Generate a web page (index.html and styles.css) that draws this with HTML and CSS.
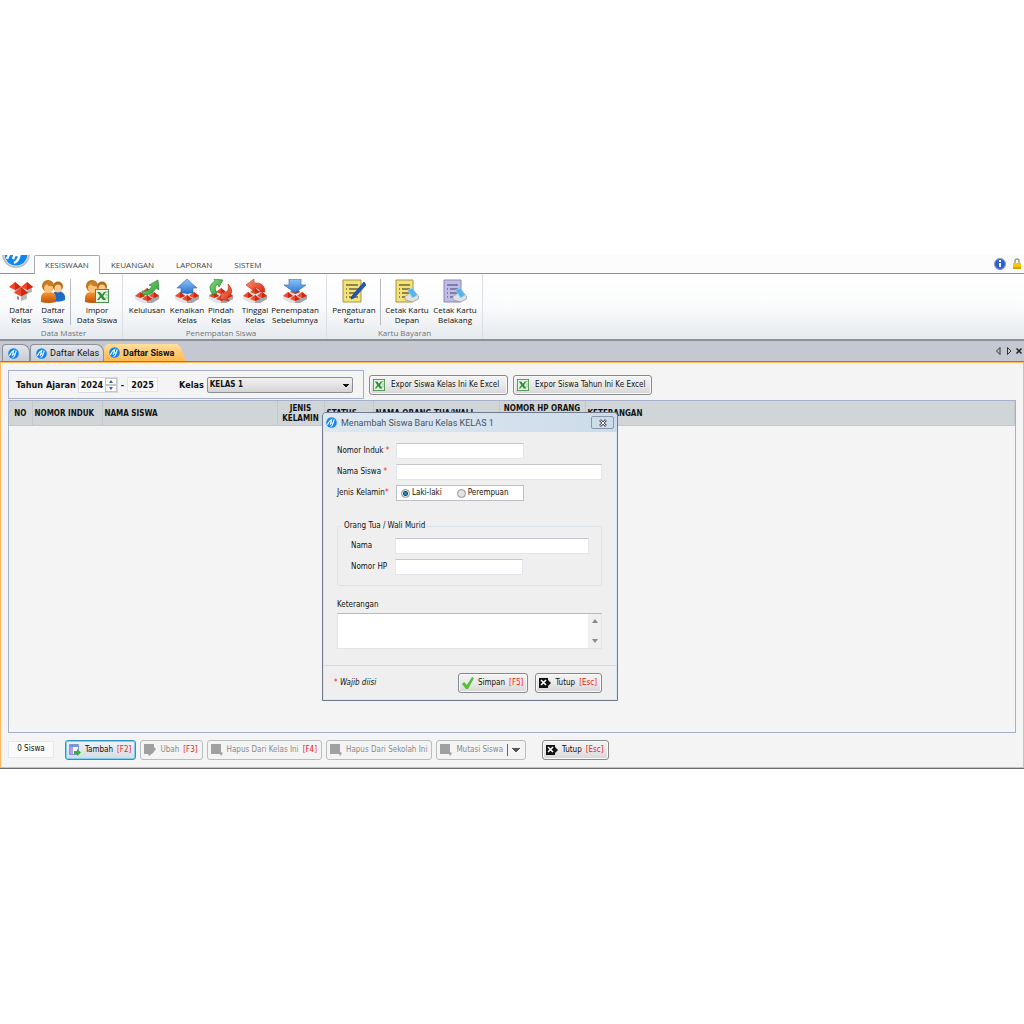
FILE: index.html
```
<!DOCTYPE html>
<html lang="id">
<head>
    <meta charset="UTF-8">
    <meta name="viewport" content="width=device-width, initial-scale=1.0">
    <title>Kesiswaan - Daftar Siswa</title>
    <link rel="stylesheet" href="styles.css">
</head>
<body>
    <svg class="sprites" aria-hidden="true">
        <defs>
            <linearGradient id="g-blue" x1="0" y1="0" x2="0" y2="1"><stop offset="0" stop-color="#8fc4f6"/><stop offset="1" stop-color="#2b78d2"/></linearGradient>
            <linearGradient id="g-green" x1="0" y1="0" x2="1" y2="1"><stop offset="0" stop-color="#8be07f"/><stop offset="1" stop-color="#229a30"/></linearGradient>
            <linearGradient id="g-red" x1="0" y1="0" x2="1" y2="1"><stop offset="0" stop-color="#ff9a72"/><stop offset="1" stop-color="#d8260c"/></linearGradient>
            <linearGradient id="g-orange" x1="0" y1="0" x2="0" y2="1"><stop offset="0" stop-color="#f59a35"/><stop offset="1" stop-color="#c05006"/></linearGradient>
        </defs>
        <symbol id="logo" viewBox="0 0 24 24">
            <circle cx="12" cy="12" r="11.5" fill="#0e86f0"/>
            <path d="M3 17Q6 9 12.500 5.500L10.500 13h5M18 5.500 15 15Q14 19 10 21M10.500 13l-1.500 4" fill="none" stroke="#fff" stroke-width="2.400"/>
        </symbol>
        <symbol id="house" viewBox="0 0 12 12">
            <path d="M1 5v5l5 2V6z" fill="#f2f2f2"/>
            <path d="M11 5v5l-5 2V6z" fill="#b4b6b8"/>
            <path d="M0 5 6 0l6 5-6 3z" fill="#f0482a"/>
            <path d="M6 0v8l6-3z" fill="#cf2a10"/>
        </symbol>
        <symbol id="houses" viewBox="0 0 24 24">
            <path d="M0 16 12 10l12 6v4l-7 4H7l-7-4z" fill="#e0e2e4"/>
            <path d="M12 20v4h5l7-4v-3z" fill="#a4a6a9"/>
            <path d="M7 13l5-4 5 4-5 2zM0 17l5-4 5 4-5 2zM14 17l5-4 5 4-5 2zM7 20l5-4 5 4-5 2z" fill="#f0482a"/>
            <path d="M12 9v6l5-2zM5 13v6l5-2zM19 13v6l5-2zM12 16v6l5-2z" fill="#cf2a10"/>
        </symbol>
        <symbol id="classes" viewBox="0 0 24 24">
            <use href="#house" x="0" y="3" width="12" height="12"/>
            <use href="#house" x="12" y="3" width="12" height="12"/>
            <use href="#house" x="5" y="8" width="14" height="14"/>
            <path d="M8 20v-3l2 1v3z" fill="#8a8c90"/>
        </symbol>
        <symbol id="people" viewBox="0 0 24 24">
            <path d="M12 22v-5q0-5 5-5t7 5v4q-6 3-12 1z" fill="#1f6bc4"/>
            <circle cx="17" cy="7.500" r="5" fill="#b06d14"/>
            <ellipse cx="17" cy="9.500" rx="3.500" ry="4" fill="#ffc98f"/>
            <path d="M0 23v-4q0-6 6-6h3q6 0 6 6v4q-8 2-15 0z" fill="url(#g-orange)"/>
            <circle cx="7" cy="7" r="6" fill="#b86c14"/>
            <ellipse cx="7.500" cy="9" rx="4.500" ry="5" fill="#ffc07c"/>
            <path d="M2 7q1-5 6-5 4 1 4 5-5 1-6-2-1 2-4 2z" fill="#c98222"/>
        </symbol>
        <symbol id="excel" viewBox="0 0 14 14">
            <rect x=".5" y=".5" width="13" height="13" fill="#e6f2e4" stroke="#4a8f4c"/>
            <path d="M10 3h3M10 6h3M10 9h3" stroke="#8bc08c"/>
            <path d="M2 3h3l2 2.500L9 3h2L8.200 7 11 11H8L6 8.500 4 11H2l3-4z" fill="#2f8f36"/>
        </symbol>
        <symbol id="import" viewBox="0 0 24 24">
            <use href="#people" width="24" height="24"/>
            <use href="#excel" x="10" y="10" width="14" height="14"/>
        </symbol>
        <symbol id="graduate" viewBox="0 0 24 24">
            <use href="#houses" width="24" height="24"/>
            <path d="M7 12q7 1 10-5l-3-1 9-5 1 10-3-2q-5 9-14 6z" fill="url(#g-green)" stroke="#1a7a26" stroke-width=".6"/>
        </symbol>
        <symbol id="promote" viewBox="0 0 24 24">
            <use href="#houses" width="24" height="24"/>
            <path d="M12 0 22 9h-4v5H6V9H2z" fill="url(#g-blue)" stroke="#2a66b0" stroke-width=".6"/>
        </symbol>
        <symbol id="transfer" viewBox="0 0 24 24">
            <use href="#houses" width="24" height="24"/>
            <path d="M4 16Q-3 7 6 2L5 0l9 1-4 7-1-3q-5 3-1 9z" fill="url(#g-green)" stroke="#1a7a26" stroke-width=".6"/>
            <path d="M19 5q8 8-1 14l2 3-9-2 2-8 2 3q6-4 4-10z" fill="url(#g-red)" stroke="#b91c08" stroke-width=".6"/>
        </symbol>
        <symbol id="stay" viewBox="0 0 24 24">
            <use href="#houses" width="24" height="24"/>
            <path d="M3 6 11 0v4q11-1 11 9h-5q0-4-6-4v3z" fill="url(#g-red)" stroke="#c5290e" stroke-width=".6"/>
        </symbol>
        <symbol id="previous" viewBox="0 0 24 24">
            <use href="#houses" width="24" height="24"/>
            <path d="M6 0h12v6h5l-11 8L1 6h5z" fill="url(#g-blue)" stroke="#2a66b0" stroke-width=".6"/>
        </symbol>
        <symbol id="card-edit" viewBox="0 0 24 24">
            <path d="M1 1h18v22H1z" fill="#f5e276" stroke="#a8944a"/>
            <path d="M4 6h12M7 10h9M7 14h9M7 18h9M4 10h1M4 14h1M4 18h1" stroke="#6a6646" stroke-width="1.500"/>
            <path d="M22 3 24 6 12 19l-3 1 1-3z" fill="#1c5cc0" stroke="#0d347c" stroke-width=".7"/>
        </symbol>
        <symbol id="printer" viewBox="0 0 14 14">
            <path d="M0 9 8 3l6 5v3l-6 3-7-2z" fill="#dfe1e4" stroke="#85898e" stroke-width=".6"/>
            <path d="M3 2 8 0l5 7-5 3z" fill="#5ab4ec" stroke="#a8d8f4" stroke-width=".6"/>
        </symbol>
        <symbol id="card-front" viewBox="0 0 24 24">
            <path d="M1 1h17v22H1z" fill="#f5e276" stroke="#a8944a"/>
            <path d="M4 6h11M7 10h8M7 14h8M7 18h5M4 10h1M4 14h1M4 18h1" stroke="#6a6646" stroke-width="1.500"/>
            <use href="#printer" x="9" y="9" width="15" height="14"/>
        </symbol>
        <symbol id="card-back" viewBox="0 0 24 24">
            <path d="M1 1h17v22H1z" fill="#c0bce8" stroke="#8a86b8"/>
            <path d="M4 6h11M7 10h8M7 14h8M7 18h5M4 10h1M4 14h1M4 18h1" stroke="#6c6a90" stroke-width="1.500"/>
            <use href="#printer" x="9" y="9" width="15" height="14"/>
        </symbol>
        <symbol id="add" viewBox="0 0 12 12">
            <path d="M.5.500h9v10h-9z" fill="#f5f8ff" stroke="#7b98d6"/>
            <path d="M1 1h8v2H1z" fill="#6f94e0"/><path d="M1 3h3v7H1z" fill="#b79af0"/>
            <path d="M5 7h3V5l4 3.500L8 12v-2H5z" fill="#35b32c"/>
        </symbol>
        <symbol id="edit-off" viewBox="0 0 12 12"><path d="M0 0h10v3l2 2-3 4-4 3-1-2H0z" fill="#a0a0a0"/></symbol>
        <symbol id="item-off" viewBox="0 0 12 12"><path d="M0 0h10v8l2 1-2 3-1-2H0z" fill="#a0a0a0"/></symbol>
        <symbol id="exit" viewBox="0 0 12 10">
            <path d="M0 0h9v2l3 3-3 3v2H0z" fill="#111"/>
            <path d="m2 2 5 5M7 2 2 7" stroke="#fff" stroke-width="1.600"/>
        </symbol>
        <symbol id="check" viewBox="0 0 12 12"><path d="m0 7 2-2 3 3 5-8 2 1-6 11H4z" fill="#52c234"/></symbol>
    </svg>

    <div class="app">
        <nav class="menu">
            <span class="orb"><svg><use href="#logo"/></svg></span>
            <button class="menu-tab active">KESISWAAN</button>
            <button class="menu-tab">KEUANGAN</button>
            <button class="menu-tab">LAPORAN</button>
            <button class="menu-tab">SISTEM</button>
            <div class="menu-right">
                <svg class="info" viewBox="0 0 12 12"><circle cx="6" cy="6" r="5.500" fill="#2c5fdc" stroke="#8d9cc0"/><path d="M5 5h2v4H5zM5 2h2v2H5z" fill="#fff"/></svg>
                <svg class="lock" viewBox="0 0 8 12"><path d="M2 6V3q0-2 2-2t2 2v3" fill="none" stroke="#a09a80" stroke-width="1.500"/><path d="M0 5h8v6H0z" fill="#f5c800"/><path d="M0 9h8v2H0z" fill="#d89c00"/></svg>
            </div>
        </nav>

        <div class="ribbon">
            <section class="group master">
                <div class="tools">
                    <button class="tool"><svg><use href="#classes"/></svg>Daftar<br>Kelas</button>
                    <button class="tool"><svg><use href="#people"/></svg>Daftar<br>Siswa</button>
                    <i class="divider"></i>
                    <button class="tool wide"><svg><use href="#import"/></svg>Impor<br>Data Siswa</button>
                </div>
                <h2>Data Master</h2>
            </section>
            <section class="group placement">
                <div class="tools">
                    <button class="tool wide"><svg><use href="#graduate"/></svg>Kelulusan</button>
                    <button class="tool"><svg><use href="#promote"/></svg>Kenaikan<br>Kelas</button>
                    <button class="tool medium"><svg><use href="#transfer"/></svg>Pindah<br>Kelas</button>
                    <button class="tool"><svg><use href="#stay"/></svg>Tinggal<br>Kelas</button>
                    <button class="tool wide"><svg><use href="#previous"/></svg>Penempatan<br>Sebelumnya</button>
                </div>
                <h2>Penempatan Siswa</h2>
            </section>
            <section class="group cards">
                <div class="tools">
                    <button class="tool wide"><svg><use href="#card-edit"/></svg>Pengaturan<br>Kartu</button>
                    <i class="divider"></i>
                    <button class="tool wide"><svg><use href="#card-front"/></svg>Cetak Kartu<br>Depan</button>
                    <button class="tool wide"><svg><use href="#card-back"/></svg>Cetak Kartu<br>Belakang</button>
                </div>
                <h2>Kartu Bayaran</h2>
            </section>
        </div>

        <div class="tabs">
            <button class="tab home" aria-label="Beranda"><svg><use href="#logo"/></svg></button>
            <button class="tab"><svg><use href="#logo"/></svg>Daftar Kelas</button>
            <button class="tab active"><svg><use href="#logo"/></svg>Daftar Siswa</button>
            <svg class="tab-nav" viewBox="0 0 28 10"><path d="M5 1.500v7L1.500 5zM12.500 1.500v7L16 5z" fill="none" stroke="#333"/><path d="m21.500 2.500 5 5M26.500 2.500l-5 5" stroke="#222" stroke-width="1.500"/></svg>
        </div>

        <main class="page">
            <div class="toolbar">
                <div class="filter">
                    <label for="tahun">Tahun Ajaran</label>
                    <div class="spin">
                        <input type="text" id="tahun" value="2024">
                        <span class="arrows"><button aria-label="Naik"><svg viewBox="0 0 6 3"><path d="M3 0 5 3H1z"/></svg></button><button aria-label="Turun"><svg viewBox="0 0 6 3"><path d="M1 0h4L3 3z"/></svg></button></span>
                    </div>
                    <span class="dash">-</span>
                    <input type="text" class="year" value="2025" aria-label="Tahun akhir" readonly>
                    <label for="kelas" class="kelas">Kelas</label>
                    <select id="kelas"><option>KELAS 1</option></select>
                </div>
                <button class="btn export"><svg><use href="#excel"/></svg>Expor Siswa Kelas Ini Ke Excel</button>
                <button class="btn export"><svg><use href="#excel"/></svg>Expor Siswa Tahun Ini Ke Excel</button>
            </div>

            <div class="grid">
                <table>
                    <colgroup><col class="c-no"><col class="c-induk"><col class="c-nama"><col class="c-jenis"><col class="c-status"><col class="c-ortu"><col class="c-hp"><col></colgroup>
                    <thead>
                        <tr>
                            <th>NO</th>
                            <th>NOMOR INDUK</th>
                            <th>NAMA SISWA</th>
                            <th class="center">JENIS<br>KELAMIN</th>
                            <th>STATUS</th>
                            <th>NAMA ORANG TUA/WALI</th>
                            <th class="center">NOMOR HP ORANG<br>TUA/WALI</th>
                            <th>KETERANGAN</th>
                        </tr>
                    </thead>
                </table>
            </div>

            <div class="actions">
                <output class="count">0 Siswa</output>
                <button class="btn primary"><svg><use href="#add"/></svg>Tambah <b>[F2]</b></button>
                <button class="btn off"><svg><use href="#edit-off"/></svg>Ubah <b>[F3]</b></button>
                <button class="btn off"><svg><use href="#item-off"/></svg>Hapus Dari Kelas Ini <b>[F4]</b></button>
                <button class="btn off"><svg><use href="#item-off"/></svg>Hapus Dari Sekolah Ini</button>
                <button class="btn off split"><svg><use href="#item-off"/></svg>Mutasi Siswa<span class="caret"></span></button>
                <button class="btn close"><svg><use href="#exit"/></svg>Tutup <b>[Esc]</b></button>
            </div>
        </main>

        <form class="dialog" role="dialog" aria-labelledby="dialog-title">
            <header>
                <svg><use href="#logo"/></svg>
                <h1 id="dialog-title">Menambah Siswa Baru Kelas KELAS 1</h1>
                <button type="button" aria-label="Tutup"><svg viewBox="0 0 8 8"><path d="m1 1 6 6M7 1 1 7" stroke="#555d68" stroke-width="2.600"/><path d="m1.500 1.500 5 5M6.500 1.500l-5 5" stroke="#fff"/></svg></button>
            </header>
            <div class="fields">
                <div class="row">
                    <label for="induk">Nomor Induk <b>*</b></label>
                    <input type="text" id="induk" class="short">
                </div>
                <div class="row">
                    <label for="nama">Nama Siswa <b>*</b></label>
                    <input type="text" id="nama" class="long">
                </div>
                <div class="row">
                    <span class="label">Jenis Kelamin<b>*</b></span>
                    <div class="radios">
                        <input type="radio" name="jk" id="laki" checked><label for="laki">Laki-laki</label>
                        <input type="radio" name="jk" id="perempuan"><label for="perempuan">Perempuan</label>
                    </div>
                </div>
                <fieldset>
                    <legend>Orang Tua / Wali Murid</legend>
                    <div class="row">
                        <label for="ortu">Nama</label>
                        <input type="text" id="ortu" class="long">
                    </div>
                    <div class="row">
                        <label for="hp">Nomor HP</label>
                        <input type="text" id="hp" class="short">
                    </div>
                </fieldset>
                <label for="keterangan">Keterangan</label>
                <div class="memo">
                    <textarea id="keterangan"></textarea>
                    <span class="scroll"><svg viewBox="0 0 6 4"><path d="M3 0 6 4H0z"/></svg><svg viewBox="0 0 6 4"><path d="M0 0h6L3 4z"/></svg></span>
                </div>
            </div>
            <footer>
                <span class="note"><b>*</b> <em>Wajib diisi</em></span>
                <button type="submit" class="btn save"><svg><use href="#check"/></svg>Simpan <b>[F5]</b></button>
                <button type="button" class="btn close"><svg><use href="#exit"/></svg>Tutup <b>[Esc]</b></button>
            </footer>
        </form>
    </div>
</body>
</html>
```
FILE: styles.css
```
/* General Styles */
* {
    box-sizing: border-box;
}

body {
    display: flex;
    flex-direction: column;
    min-height: 100vh;
    margin: 0;
    padding: 255px 0;
    background-color: #ffffff;
    color: #111;
    font-family: "DejaVu Sans Condensed", "DejaVu Sans", sans-serif;
    font-stretch: condensed;
    font-size: 8px;
    line-height: 12px;
}

button, input, select, textarea {
    margin: 0;
    padding: 0;
    font: inherit;
    color: inherit;
    border: none;
    background: none;
    outline: none;
}

h1, h2 {
    margin: 0;
    font-weight: normal;
}

svg {
    display: block;
    flex: none;
}

.sprites {
    position: absolute;
    width: 0;
    height: 0;
}

.app {
    position: relative;
    display: flex;
    flex-direction: column;
    flex: 1;
}

/* Menu */
.menu {
    display: flex;
    height: 19px;
    background-color: #fcfcfc;
    border-bottom: 1px solid #8d9299;
    font-family: "Open Sans", sans-serif;
    font-stretch: normal;
    color: #444;
}

.orb {
    display: flex;
    align-items: flex-end;
    width: 34px;
    height: 13px;
    padding-left: 2px;
    overflow: hidden;
}

.orb svg {
    width: 28px;
    height: 28px;
    border: 2px solid #b9c3cf;
    border-radius: 50%;
}

.menu-tab {
    height: 19px;
    padding: 1px 11px 0;
}

.menu-tab.active {
    background-color: #ffffff;
    border: 1px solid #a5abb3;
    border-bottom: none;
    border-radius: 2px 2px 0 0;
    padding: 0 10px;
}

.menu-right {
    display: flex;
    align-items: center;
    gap: 7px;
    margin-left: auto;
    padding-right: 3px;
}

.info {
    width: 12px;
    height: 12px;
}

.lock {
    width: 8px;
    height: 12px;
}

/* Ribbon */
.ribbon {
    display: flex;
    height: 67px;
    background: linear-gradient(#ffffff, #fafbfc 50%, #e6eaee);
    border-bottom: 2px solid #8a9097;
    font-family: "Open Sans", sans-serif;
    font-stretch: normal;
    line-height: 10px;
}

.group {
    display: flex;
    flex-direction: column;
    border-right: 1px solid #dcdfe3;
}

.master {
    padding-left: 5px;
}

.placement {
    padding-right: 7px;
}

.cards {
    padding: 0 3px;
}

.tools {
    display: flex;
    height: 54px;
    padding-top: 5px;
}

.tool {
    display: flex;
    flex-direction: column;
    align-items: center;
    width: 32px;
    line-height: 10px;
    white-space: nowrap;
}

.tool svg {
    width: 24px;
    height: 24px;
    margin-bottom: 2px;
}

.tool.medium {
    width: 36px;
}

.tool.wide {
    width: 48px;
}

.divider {
    width: 1px;
    height: 46px;
    margin: 0 2px;
    background-color: #b8bcc2;
}

.master .divider {
    margin: 0 1px;
}

.master .tool.wide {
    width: 50px;
}

.group h2 {
    font-size: 8px;
    text-align: center;
    color: #6b7480;
}

/* Document tabs */
.tabs {
    display: flex;
    align-items: flex-end;
    height: 21px;
    padding-left: 2px;
    background-color: #c5c8d1;
    border-bottom: 1px solid #7c8088;
    font-family: Roboto, sans-serif;
    font-stretch: normal;
    font-size: 9px;
}

.tab {
    display: flex;
    align-items: center;
    gap: 3px;
    height: 17px;
    padding: 0 4px 0 5px;
    background: linear-gradient(#e4e7ec, #c6cad3);
    border: 1px solid #8b9099;
    border-bottom: none;
    border-radius: 4px 8px 0 0;
}

.tab svg {
    width: 11px;
    height: 11px;
}

.tab.home {
    width: 28px;
}

.tab.active {
    background: linear-gradient(#ffdf9e, #ffb850);
    border: none;
    padding-right: 12px;
    font-weight: bold;
    clip-path: polygon(0 3px, 3px 0, calc(100% - 9px) 0, calc(100% - 6px) 3px, 100% 100%, 0 100%);
}

.tabs .tab-nav {
    width: 28px;
    height: 10px;
    margin: 0 1px 5px auto;
}

/* Page */
.page {
    display: flex;
    flex-direction: column;
    flex: 1;
    padding: 7px 7px 8px;
    background-color: #f4f4f4;
    border: 1px solid #ffb95c;
    box-shadow: 0 1px #6d6a70;
    margin-bottom: 1px;
}

.toolbar {
    display: flex;
    align-items: center;
    gap: 5px;
    height: 29px;
    margin-bottom: 1px;
}

.filter {
    display: flex;
    align-items: center;
    width: 356px;
    height: 29px;
    padding-left: 7px;
    border: 1px solid #a7aecb;
    font-size: 9px;
    font-weight: bold;
}

.spin {
    display: flex;
    width: 40px;
    height: 16px;
    margin-left: 2px;
    background-color: #ffffff;
    border: 1px solid #d5dae0;
}

.spin input {
    width: 26px;
    padding-left: 2px;
}

.arrows {
    display: flex;
    flex-direction: column;
    width: 12px;
}

.arrows button {
    display: flex;
    align-items: center;
    justify-content: center;
    height: 7px;
    border: 1px solid #c3c7cd;
}

.arrows svg {
    width: 6px;
    height: 3px;
    fill: #3c5a9a;
}

.dash {
    margin: 0 3px;
}

.year {
    width: 31px;
    height: 15px;
    background-color: #fafafa;
    border: 1px solid #e2e5e9;
    text-align: center;
}

.kelas {
    margin: 0 3px 0 21px;
}

select {
    width: 146px;
    height: 16px;
    padding-left: 2px;
    appearance: none;
    border: 1px solid #8b8e92;
    border-radius: 2px;
    background-image: linear-gradient(45deg, transparent 50%, #111 50%), linear-gradient(-45deg, transparent 50%, #111 50%), linear-gradient(#f3f3f3, #d4d4d4);
    background-image: conic-gradient(from -45deg at 50% 100%, #111 90deg, transparent 0), linear-gradient(#f3f3f3, #d4d4d4);
    background-position: right 3px top 6px, 0 0;
    background-size: 6px 3px, 100% 100%;
    background-repeat: no-repeat;
    font-size: 8px;
}

/* Buttons */
.btn {
    display: flex;
    align-items: center;
    gap: 4px;
    height: 20px;
    padding: 0 4px 0 3px;
    border: 1px solid #85888c;
    border-radius: 3px;
    background: linear-gradient(#f4f4f4, #e9e9e9 50%, #d6d6d6);
    box-shadow: inset 0 0 0 1px #fafafa;
    white-space: nowrap;
}

.btn svg {
    width: 12px;
    height: 12px;
}

.btn.close svg {
    height: 10px;
}

.btn b {
    font-weight: normal;
    color: #f01818;
}

.btn.primary {
    background: linear-gradient(#eef3f7, #d3dce4);
    border-color: #2f93bd;
    box-shadow: inset 0 0 0 1px #7fd0ee;
}

.btn.off {
    color: #8a8a8a;
    background: #f4f4f4;
    border-color: #b8bdbf;
    box-shadow: none;
}

.btn.export {
    width: 139px;
    gap: 6px;
}

/* Student grid */
.grid {
    flex: 1;
    border: 1px solid #a7b0cb;
    margin-bottom: 7px;
}

table {
    width: 100%;
    border-collapse: collapse;
    table-layout: fixed;
}

thead {
    background-color: #d0d6d8;
}

th {
    height: 24px;
    padding: 2px 2px 0;
    border-right: 1px solid #c2c9cc;
    border-bottom: 1px solid #c2c9cc;
    font-weight: bold;
    line-height: 10px;
    text-align: left;
    white-space: nowrap;
}

th:first-child, .center {
    text-align: center;
}

.c-no { width: 23px; }
.c-induk { width: 70px; }
.c-nama { width: 175px; }
.c-jenis { width: 47px; }
.c-status { width: 49px; }
.c-ortu { width: 126px; }
.c-hp { width: 86px; }

/* Bottom actions */
.actions {
    display: flex;
    align-items: center;
    gap: 4px;
    height: 19px;
}

.count {
    width: 46px;
    height: 17px;
    margin-right: 7px;
    padding-top: 1px;
    background-color: #fafafa;
    border: 1px solid #e6e9ec;
    text-align: center;
}

.caret {
    width: 14px;
    height: 12px;
    border-left: 1px solid #666;
    background: conic-gradient(from -45deg at 50% 100%, #555 90deg, transparent 0) 4px 4px / 8px 4px no-repeat;
}

.actions .close {
    margin-left: 12px;
}

/* Dialog */
.dialog {
    position: absolute;
    top: 157px;
    left: 322px;
    width: 296px;
    background-color: #efefef;
    border: 1px solid #6f7a8c;
    border-radius: 4px 4px 0 0;
    box-shadow: inset 0 0 0 1px #dbe6f0;
}

.dialog header {
    display: flex;
    align-items: center;
    gap: 4px;
    height: 19px;
    padding: 0 3px;
    background: linear-gradient(90deg, #dfe8f1, #cddcea);
    border-radius: 4px 4px 0 0;
    font-family: Roboto, sans-serif;
    font-stretch: normal;
    color: #4a525e;
}

.dialog header svg {
    width: 11px;
    height: 11px;
}

.dialog h1 {
    flex: 1;
    font-size: 9px;
}

.dialog header button {
    display: flex;
    align-items: center;
    justify-content: center;
    width: 23px;
    height: 13px;
    border: 1px solid #8a98ac;
    border-radius: 2px;
}

.dialog header button svg {
    width: 8px;
    height: 8px;
}

.dialog b {
    font-weight: normal;
    color: #f01818;
}

.fields {
    padding: 11px 15px 16px 14px;
}

.row {
    display: flex;
    align-items: center;
    height: 16px;
    margin-bottom: 5px;
}

.row > label, .label {
    width: 59px;
    white-space: nowrap;
}

.row > input {
    height: 16px;
    background-color: #ffffff;
    border: 1px solid #e2e5ea;
    border-top-color: #c4c8ce;
}

.short {
    width: 128px;
}

.long {
    width: 207px;
}

.radios {
    display: flex;
    align-items: center;
    width: 128px;
    height: 16px;
    padding-left: 4px;
    background-color: #ffffff;
    border: 1px solid #bcc0c6;
    white-space: nowrap;
}

.radios input {
    flex: none;
    width: 9px;
    height: 9px;
    margin-right: 2px;
    appearance: none;
    border: 1px solid #8b8f94;
    border-radius: 50%;
    background-color: #e4e4e4;
}

.radios input:checked {
    background: radial-gradient(circle, #1d8fc0 0 1px, #15384f 2px, #e8eef2 3px);
}

.radios label {
    margin-right: 15px;
}

fieldset {
    margin: 19px 0 13px;
    padding: 6px 0 5px 13px;
    border: 1px solid #dce3e8;
    border-radius: 2px;
}

legend {
    margin-left: -9px;
    padding: 0 2px;
}

fieldset .row > label {
    width: 44px;
}

fieldset .long {
    width: 194px;
}

.memo {
    display: flex;
    height: 36px;
    margin-top: 2px;
    background-color: #ffffff;
    border: 1px solid #e2e5ea;
    border-top-color: #b5b9c0;
}

.memo textarea {
    flex: 1;
    resize: none;
}

.scroll {
    display: flex;
    flex-direction: column;
    justify-content: space-between;
    align-items: center;
    width: 13px;
    padding: 5px 0;
    background-color: #f0f0f0;
}

.scroll svg {
    width: 6px;
    height: 4px;
    fill: #8a8a8a;
}

.dialog footer {
    display: flex;
    align-items: center;
    gap: 7px;
    height: 35px;
    padding: 0 15px 0 11px;
    border-top: 1px solid #d5dde4;
}

.note {
    flex: 1;
}
```
